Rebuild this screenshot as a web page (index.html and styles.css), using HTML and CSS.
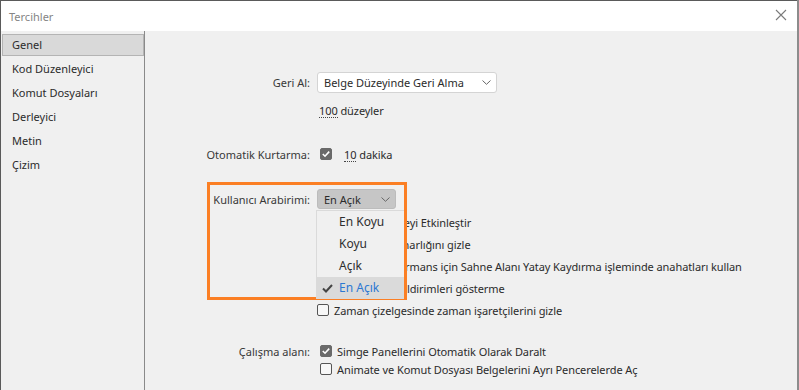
FILE: index.html
```html
<!DOCTYPE html>
<html lang="tr">
	<head>
		<meta charset="utf-8" />
		<title>Tercihler</title>
		<link rel="stylesheet" href="styles.css">
	</head>

	<body>
		<div class="window">
			<div class="titlebar">
				<span class="title">Tercihler</span>
				<svg class="close" width="12" height="12" viewBox="0 0 12 12">
					<path d="M1 1 L11 11 M11 1 L1 11" stroke="#7a7a7a" stroke-width="1.1" fill="none" />
				</svg>
			</div>

			<div class="content">
				<ul class="nav">
					<li class="active">Genel</li>
					<li>Kod Düzenleyici</li>
					<li>Komut Dosyaları</li>
					<li>Derleyici</li>
					<li>Metin</li>
					<li>Çizim</li>
				</ul>

				<div class="main">
					<div class="row r-undo">
						<span class="label">Geri Al:</span>
						<div class="select select-white">
							<span>Belge Düzeyinde Geri Alma</span>
							<svg width="9" height="5" viewBox="0 0 9 5"><path d="M0.5 0.5 L4.5 4.3 L8.5 0.5" stroke="#666" fill="none" /></svg>
						</div>
					</div>
					<div class="row r-levels">
						<span class="label"></span>
						<span class="text"><span class="num">100</span> düzeyler</span>
					</div>

					<div class="row r-save">
						<span class="label">Otomatik Kurtarma:</span>
						<span class="check on offset"></span>
						<span class="text"><span class="num">10</span> dakika</span>
					</div>

					<div class="row r-ui">
						<span class="label">Kullanıcı Arabirimi:</span>
						<div class="select select-grey">
							<span>En Açık</span>
							<svg width="9" height="5" viewBox="0 0 9 5"><path d="M0.5 0.5 L4.5 4.3 L8.5 0.5" stroke="#666" fill="none" /></svg>
						</div>
					</div>
					<div class="opts">
						<div class="row"><span class="label"></span><span class="check"></span><span class="text">Gölgelendirmeyi Etkinleştir</span></div>
						<div class="row"><span class="label"></span><span class="check"></span><span class="text">Sahnedeki Kenarlığını gizle</span></div>
						<div class="row"><span class="label"></span><span class="check"></span><span class="text">Daha iyi performans için Sahne Alanı Yatay Kaydırma işleminde anahatları kullan</span></div>
						<div class="row"><span class="label"></span><span class="check"></span><span class="text">Güncelleme bildirimleri gösterme</span></div>
						<div class="row"><span class="label"></span><span class="check"></span><span class="text">Zaman çizelgesinde zaman işaretçilerini gizle</span></div>
					</div>

					<div class="row r-work">
						<span class="label">Çalışma alanı:</span>
						<span class="check on offset"></span>
						<span class="text">Simge Panellerini Otomatik Olarak Daralt</span>
					</div>
					<div class="row r-work2">
						<span class="label"></span>
						<span class="check offset"></span>
						<span class="text">Animate ve Komut Dosyası Belgelerini Ayrı Pencerelerde Aç</span>
					</div>

					<div class="highlight"></div>

					<ul class="menu">
						<li>En Koyu</li>
						<li>Koyu</li>
						<li>Açık</li>
						<li class="picked">
							<svg class="tick" width="11" height="9" viewBox="0 0 11 9"><path d="M1 4.5 L4 7.5 L10 1" stroke="#444" stroke-width="2" fill="none" /></svg>
							En Açık
						</li>
					</ul>
				</div>
			</div>
		</div>
	</body>
</html>
```

FILE: styles.css
```css
html,
body {
	margin: 0;
	padding: 0;
	background: #8c8c8c;
}
body {
	font-family: "Noto Sans", "DejaVu Sans", sans-serif;
	font-size: 11px;
	color: #2b2b2b;
}
.window {
	width: 796px;
	height: 389px;
	border-top: 1px solid #5a5a5a;
	border-left: 1px solid #5a5a5a;
	background: #f0f0f0;
	display: flex;
	flex-direction: column;
	overflow: hidden;
}
.titlebar {
	height: 30px;
	flex: none;
	background: #fff;
	display: flex;
	align-items: center;
	justify-content: space-between;
	padding: 0 10px 0 8px;
}
.title {
	color: #858585;
}
.close {
	display: block;
	margin-top: -2px;
}
.content {
	flex: 1;
	display: flex;
}
.nav {
	list-style: none;
	margin: 0;
	padding: 3px 0 0 1px;
	width: 142px;
	border-right: 1px solid #8a8a8a;
	flex: none;
}
.nav li {
	height: 20px;
	line-height: 20px;
	padding-left: 9px;
	margin-bottom: 2px;
	border: 1px solid transparent;
}
.nav li.active {
	background: #d9d9d9;
	border-color: #b4b4b4;
}
.main {
	position: relative;
	flex: 1;
	padding-top: 40px;
}
.row {
	display: flex;
	align-items: center;
	height: 22px;
	white-space: nowrap;
}
.text {
	letter-spacing: -0.08px;
}
.label {
	width: 165px;
	flex: none;
	text-align: right;
	margin-right: 7px;
	color: #383838;
}
.r-levels {
	margin-top: 6px;
}
.r-levels .text {
	margin-left: 2px;
}
.r-save,
.r-ui {
	margin-top: 23px;
}
.r-save {
	margin-top: 22px;
}
.opts {
	margin-top: 1px;
}
.r-work {
	margin-top: 21px;
	height: 18px;
}
.r-work2 {
	height: 18px;
}
.num {
	border-bottom: 1px dotted #444;
	line-height: 13px;
	display: inline-block;
}
.select {
	box-sizing: border-box;
	display: flex;
	align-items: center;
	justify-content: space-between;
	padding: 0 5px 0 6px;
	border-radius: 3px;
}
.select svg {
	display: block;
}
.select-white {
	width: 180px;
	height: 21px;
	background: #fff;
	border: 1px solid #d4d4d4;
}
.select-grey {
	width: 79px;
	height: 20px;
	background: #c6c6c6;
	border: 1px solid #bcbcbc;
}
.check {
	box-sizing: border-box;
	width: 12px;
	height: 12px;
	flex: none;
	border: 1px solid #555;
	border-radius: 2px;
	background: #f7f7f7;
	margin-right: 5px;
}
.check.offset {
	margin-left: 3px;
}
.check.on {
	background: #6a6a6a url("data:image/svg+xml;utf8,<svg xmlns='http://www.w3.org/2000/svg' width='12' height='12' viewBox='0 0 12 12'><path d='M2.8 6 L5 8.2 L9.2 3.6' stroke='white' stroke-width='1.6' fill='none'/></svg>") center/12px 12px no-repeat;
	border-color: #6a6a6a;
}
.r-save .check {
	margin-right: 12px;
}
.highlight {
	position: absolute;
	box-sizing: border-box;
	left: 62px;
	top: 151px;
	width: 200px;
	height: 118px;
	border: 3px solid #fb7f24;
}
.menu {
	position: absolute;
	left: 171px;
	top: 179px;
	width: 87px;
	margin: 0;
	padding: 0;
	list-style: none;
	background: #f0f0f0;
	border-left: 1px solid #dadada;
	border-top: 1px solid #dadada;
	font-size: 12px;
	color: #2e2e2e;
}
.menu li {
	position: relative;
	height: 22px;
	line-height: 22px;
	padding-left: 22px;
}
.menu li.picked {
	background: #dadada;
	color: #2d78d2;
}
.tick {
	position: absolute;
	left: 5px;
	top: 7px;
}
```
